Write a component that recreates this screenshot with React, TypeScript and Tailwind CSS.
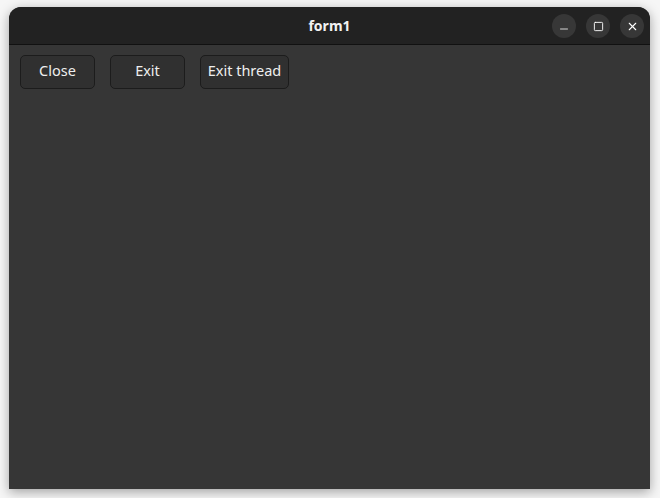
import { Minus, Square, X } from "lucide-react";

const buttons = [
  { label: "Close", width: "w-[75px]" },
  { label: "Exit", width: "w-[75px]" },
  { label: "Exit thread", width: "w-[89px]" },
];

export default function App() {
  return (
    <div
      className="w-[660px] h-[498px] bg-[#f6f6f6] pt-[7px] pl-[9px] overflow-hidden"
      style={{ fontFamily: '"Noto Sans", "Open Sans", sans-serif' }}
    >
      <div className="w-[641px] h-[482px] flex flex-col rounded-t-[12px] overflow-hidden bg-[#363636] shadow-[0_3px_12px_rgba(0,0,0,0.35)]">
        <div className="relative h-[38px] shrink-0 bg-[#222222] border-b border-[#111111] flex items-center justify-center">
          <span className="text-[14px] font-bold text-[#f2f2f2]">form1</span>
          <div className="absolute right-[6px] top-[7px] flex gap-[10px]">
            <div className="w-[24px] h-[24px] rounded-full bg-[#373737] flex items-center justify-center">
              <Minus className="w-[12px] h-[12px] text-white mt-[6px]" strokeWidth={1.6} />
            </div>
            <div className="w-[24px] h-[24px] rounded-full bg-[#373737] flex items-center justify-center">
              <Square className="w-[11px] h-[11px] text-white" strokeWidth={2} />
            </div>
            <div className="w-[24px] h-[24px] rounded-full bg-[#373737] flex items-center justify-center">
              <X className="w-[13px] h-[13px] text-white" strokeWidth={2} />
            </div>
          </div>
        </div>
        <div className="flex gap-[15px] pl-[11px] pt-[10px]">
          {buttons.map((b) => (
            <button
              key={b.label}
              className={`${b.width} h-[34px] pb-[2px] rounded-[5px] bg-[#303030] border border-[#1c1c1c] text-[14.5px] text-[#eeeeee] flex items-center justify-center`}
            >
              {b.label}
            </button>
          ))}
        </div>
      </div>
    </div>
  );
}
